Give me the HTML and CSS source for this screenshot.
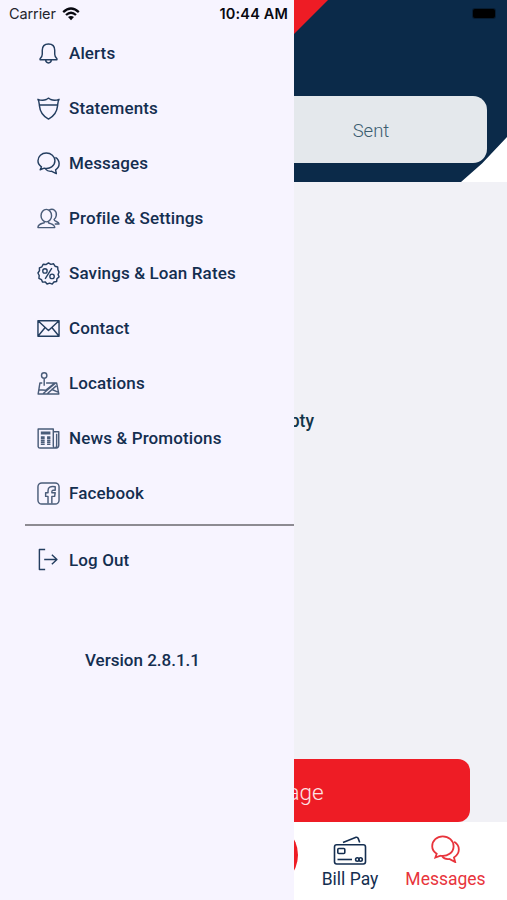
FILE: index.html
```html
<!DOCTYPE html>
<html lang="en">
<head>
<meta charset="utf-8">
<title>Messages</title>
<link rel="stylesheet" href="styles.css">
</head>
<body>
<div class="phone">
  <main class="page">
    <header class="header">
      <svg class="header-art" viewBox="0 0 507 182"><path d="M0 0H328L146 182H0Z" fill="#ee1c25"/><path d="M507 137L482 163.500L461 182H507Z" fill="#fff"/></svg>
      <div class="tab">Sent</div>
    </header>
    <section class="content"><p class="empty">Empty</p></section>
    <button class="compose">New Message</button>
    <nav class="tabbar">
      <span class="fab"></span>
      <a class="tab-item bill">
        <svg width="34" height="30" viewBox="0 0 34 30"><rect x="1.500" y="8.700" width="31" height="19.300" rx="2.200"/><path d="M10 6.500 23 1.300Q24.600 .900 25.200 2.400L26.700 6.500"/><rect x="4.800" y="12.500" width="7" height="5" rx="1"/><path d="M4.500 23.500H19"/><circle cx="24.300" cy="23.500" r="1.700"/><circle cx="27.600" cy="23.500" r="1.700"/></svg>
        <span>Bill Pay</span>
      </a>
      <a class="tab-item active">
        <svg width="29" height="28" viewBox="0 0 24 24" preserveAspectRatio="none"><path d="M9.700 1.100C4.900 1.100 1 4.800 1 9.600c0 2.800 1.500 5 3.700 6.400L3.600 19.400l4.300-1.600c5.600 1 10.800-2.700 10.800-8.200 0-4.800-4.100-8.500-9-8.500Z"/><path d="M19.200 5.800c5.100 3.200 5.200 10-.2 13.400l1 4-4.800-2.600c-2.600.4-4.700-.5-6-2.300"/></svg>
        <span>Messages</span>
      </a>
    </nav>
  </main>
  <aside class="drawer">
    <div class="status"><span>Carrier</span>
      <svg width="18" height="14" viewBox="0 0 18 14"><path d="M1.200 5.100Q9-2.100 16.800 5.100M4 8Q9 3.500 14 8" fill="none" stroke="#080810" stroke-width="2.300"/><path d="M6 10.100Q9 7.700 12 10.100L9 13.200Z" fill="#080810"/></svg>
      <b>10:44 AM</b></div>
    <ul class="menu">
      <li><svg viewBox="0 0 24 24"><path d="M12 2c-4.200 0-6.500 2.800-6.500 6.600v4.200c0 2-.8 3.300-2.300 4.800v1h17.600v-1c-1.500-1.500-2.300-2.800-2.300-4.800V8.600c0-3.800-2.300-6.600-6.500-6.600ZM9 18.600c.2 4.300 5.800 4.300 6 0"/></svg>Alerts</li>
      <li><svg viewBox="0 0 24 24"><path d="M1 2.400c3.200 1.300 6 1.300 8.700.2l2.300-1.400 2.300 1.400c2.700 1.100 5.500 1.100 8.700-.2-1.300 2-1.200 4.200-1.500 6.600-.6 6.500-4.200 11.300-9.500 14-5.300-2.700-8.900-7.500-9.500-14-.3-2.400-.2-4.600-1.500-6.600ZM2.500 8.300h19"/></svg>Statements</li>
      <li><svg viewBox="0 0 24 24"><path d="M9.700 1.100C4.900 1.100 1 4.600 1 9.200c0 2.700 1.500 4.900 3.700 6.200l-1.400 3.100 4.300-1.600c5.800 1.200 11.100-2.400 11.100-7.700 0-4.600-4.100-8.100-9-8.100Z"/><path d="M19.200 5.600c5.100 3.100 5.200 9.700.2 13l.8 4-4.800-2.500c-2.700.4-5-.4-6.500-2.200"/></svg>Messages</li>
      <li class="fine"><svg viewBox="0 0 24 24"><ellipse cx="9.700" cy="9" rx="5.500" ry="6.500"/><path d="M7.500 15v1.500C4.500 17.500 1 17.500 1 21.500h17.500c0-3.700-4-3.700-6.500-5V15M12.500 3.300c4.500-2.600 8.400.9 7.600 5.700-.3 1.700-1.100 3-2.300 4 .2 2.500 5.200 1.800 5.200 4.800h-4.500"/></svg>Profile &amp; Settings</li>
      <li><svg viewBox="0 0 24 24"><path d="m12 1 2.400 1.500 2.900-.6 1.500 2.500 2.800.8.200 2.900L23 10.500 22 13l1 2.500-2.200 1.900-.3 2.900-2.900.6-1.700 2.200-2.700-1L10.500 23l-1.800-2.200-2.900.2-1.200-2.700L2 17l.3-2.900L1 11.500l1.600-2.400-.1-2.900 2.600-1.200 1.300-2.600 2.900.3Z"/><g class="thin"><circle cx="8.300" cy="9.300" r="2.300"/><circle cx="15.700" cy="15" r="2.300"/><path d="M15.500 6.500 8.500 17.500"/></g></svg>Savings &amp; Loan Rates</li>
      <li><svg viewBox="0 0 24 24"><path d="M1 4h22v16H1ZM1 4l11 10L23 4M1 20l7.500-9M23 20l-7.500-9"/></svg>Contact</li>
      <li class="fine"><svg viewBox="0 0 24 24"><circle cx="7.500" cy="3.600" r="2.800"/><path d="M7.500 6.300v8M5.500 11.500H3L1.200 23h21.600L20.500 11.500H9.500M2 18.500l7 .5 9.500-7.500M6.500 22.500l13-11M11 22.500l9-8M15 18l7 3"/></svg>Locations</li>
      <li class="fine"><svg viewBox="0 0 24 24"><path d="M17 20V2H1.200v18.500Q1.500 22 3 22h17q2.600-.3 2.700-3V5H17M17 19c0 4 3.500 3.500 3.500 0V7"/><path d="M4 5.500h10M4 7h10M4 10.500h4M4 12h4M4 14h4M4 16h4M4 18h4M10.500 10.500H14M10.500 12H14M10.500 14H14M10.500 16H14M10.500 18H14"/></svg>News &amp; Promotions</li>
      <li class="fine"><svg viewBox="0 0 24 24"><rect x="1" y="1" width="22" height="22" rx="4"/><path d="M11.500 22.500V15H9v-3.800h2.500V9c0-3.500 2.300-4.800 7.500-4v3.600h-2c-1.300 0-1.500.5-1.500 2.600H19l-.6 3.800h-2.900v7.500"/></svg>Facebook</li>
    </ul>
    <div class="logout"><svg viewBox="0 0 24 24"><path d="M8.500 1.500h-6v21h6M7.500 12H21M15.500 7l5.300 5-5.300 5"/></svg>Log Out</div>
    <p class="version">Version 2.8.1.1</p>
  </aside>
  <span class="battery"></span>
</div>
</body>
</html>
```
FILE: styles.css
```css
* { box-sizing: border-box; }
body { margin: 0; font-family: Roboto, "Liberation Sans", sans-serif; color: #142e50; }
.phone { position: relative; width: 507px; height: 900px; overflow: hidden; }
.page { height: 900px; display: flex; flex-direction: column; background: #f1f1f6; }
.header { position: relative; height: 182px; padding: 96px 20px 0 255px; background: #0b2a49; }
.header-art { position: absolute; inset: 0; width: 507px; height: 182px; }
.tab { position: relative; height: 67px; border-radius: 0 14px 14px 0; background: #e4e8ec; color: #3b5d70; font-size: 18.500px; font-weight: 300; line-height: 71px; text-align: center; }
.content { height: 577px; padding-top: 227px; }
.empty { width: 314px; margin: 0; text-align: right; font-size: 17.500px; font-weight: 500; line-height: 24px; color: #123448; }
.compose { width: 433px; height: 63px; margin: 0 auto; border: 0; border-radius: 12px; background: #ee1c25; color: #fde4e6; font: 300 22.500px/66px Roboto, sans-serif; padding: 0; }
.tabbar { flex: 1; display: flex; background: #fff; padding-left: 205px; }
.fab { width: 92.500px; height: 66px; margin-top: 0; border-radius: 0 33px 33px 0; background: #ee1c25; }
.tab-item { display: flex; flex-direction: column; align-items: center; font-size: 17.500px; line-height: 22px; }
.tab-item svg { fill: none; stroke: currentColor; stroke-width: 1.600; }
.bill { width: 105px; padding-top: 14px; }
.bill span { margin-top: 2px; }
.active { width: 86px; padding-top: 13px; color: #e8343c; }
.active span { margin-top: 5px; }
.active svg { stroke-width: 1.500; }
.drawer { position: absolute; left: 0; top: 0; width: 294px; height: 900px; background: #f7f4ff; font-size: 17px; font-weight: 500; }
.status { display: flex; align-items: center; height: 26px; padding: 1px 6px 0 9px; font: 14.500px/26px Inter, sans-serif; color: #24242c; }
.status span { letter-spacing: -.1px; }
.status svg { margin-left: 6px; }
.status b { margin-left: auto; font-weight: 600; letter-spacing: .15px; color: #080810; }
.menu { list-style: none; margin: -1px 0 0 25px; padding: 0 0 4px; border-bottom: 2px solid #8d8b92; }
.menu li, .logout { display: flex; align-items: center; height: 55px; padding-left: 12px; gap: 9px; letter-spacing: .12px; white-space: nowrap; }
.menu svg, .logout svg { width: 23px; height: 23px; fill: none; stroke: #243e60; stroke-width: 1.500; stroke-linejoin: round; }
.menu svg { margin-top: 1px; }
.menu .fine svg { stroke: #4a5c79; stroke-width: 1.500; }
.menu .thin { stroke-width: 1.400; }
.logout { margin: 6px 0 0 25px; }
.logout svg { margin-bottom: 1px; }
.version { margin: 61px 0 0 85px; line-height: 24px; }
.battery { position: absolute; left: 473px; top: 9px; width: 22px; height: 9px; border-radius: 2px; background: #000; box-shadow: 0 0 0 1px #071c31; }
```
